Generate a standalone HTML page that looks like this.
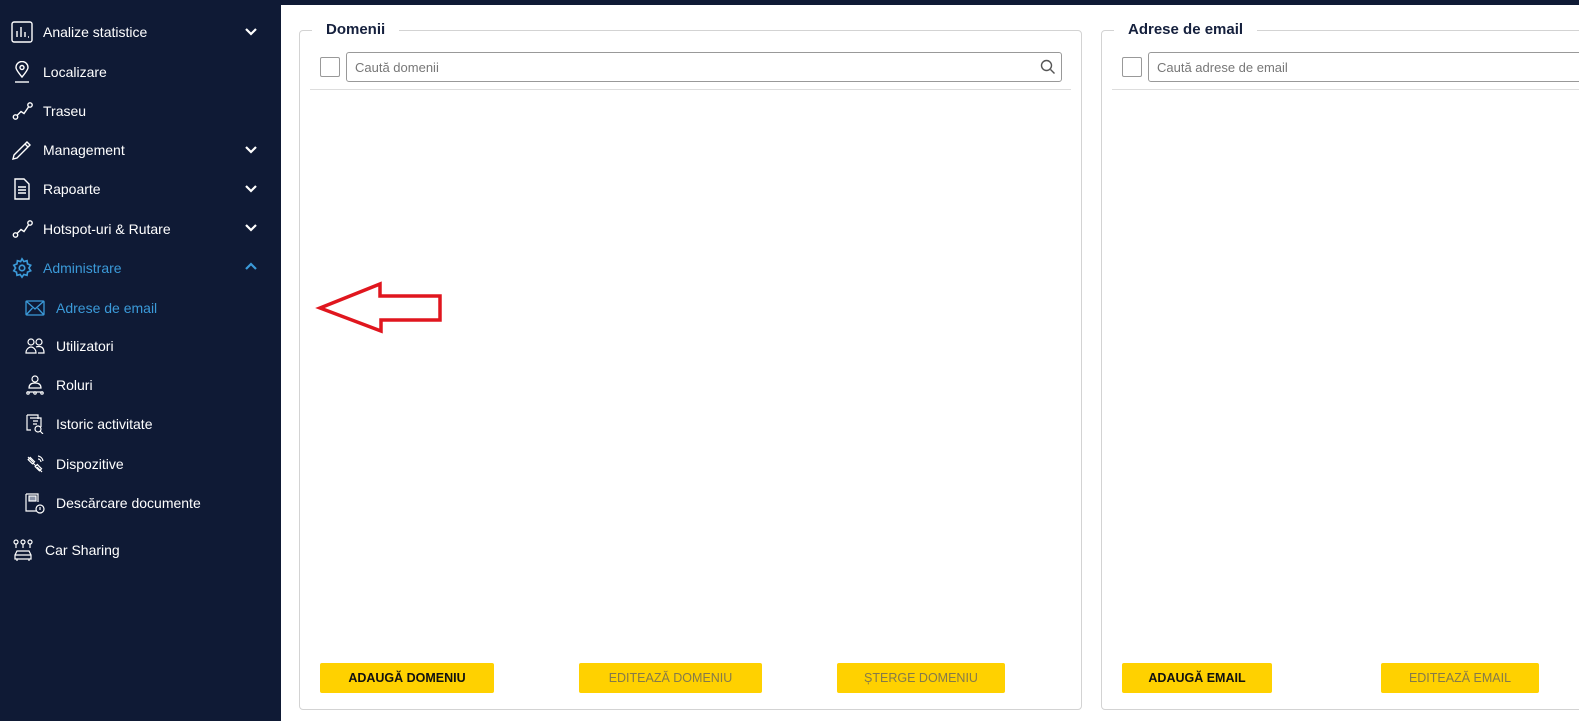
<!DOCTYPE html>
<html><head><meta charset="utf-8"><style>
*{box-sizing:border-box;margin:0;padding:0}
body{width:1579px;height:721px;overflow:hidden;background:#fff;font-family:"Liberation Sans",sans-serif;position:relative}
.sb{position:absolute;left:0;top:0;width:281px;height:721px;background:#0f1a35;color:#fff}
.top{position:absolute;left:281px;top:0;right:0;height:5px;background:#0f1a35}
.it{position:absolute;left:0;height:24px;display:flex;align-items:center;font-size:14px;color:#fff}
.it svg{position:absolute}
.it span{position:absolute;white-space:nowrap}
.chev{position:absolute;left:244px}
.blue{color:#3b9ad9}
.panel{position:absolute;top:30px;height:680px;border:1px solid #d3d3d3;border-radius:4px}
.legend{position:absolute;top:-10px;background:#fff;padding:0 14px;font-weight:bold;font-size:15px;color:#15203d}
.cb{position:absolute;top:26px;left:20px;width:20px;height:20px;border:1px solid #999;border-radius:2px}
.search{position:absolute;top:21px;left:46px;height:30px;border:1px solid #999;border-radius:3px;font-size:13px;color:#777;padding:7px 8px}
.hr{position:absolute;top:58px;left:10px;height:1px;background:#ddd}
.btn{position:absolute;top:632px;height:30px;background:#ffd100;border-radius:2px;font-size:12.5px;font-weight:bold;display:flex;align-items:center;justify-content:center;color:#111}
.dis{color:#857a4a;font-weight:normal}
</style></head><body>
<div class="sb">
<div class="it" style="top:20px"><svg style="left:11px" width="22" height="22" viewBox="0 0 22 22" fill="none" stroke="#fff" stroke-width="1.4"><rect x="1" y="1" width="20" height="20" rx="2"/><path d="M6 16V10M10 16V6M14 16V11M17 16h1"/></svg><span style="left:43px">Analize statistice</span></div>
<div class="it" style="top:60px"><svg style="left:13px" width="18" height="22" viewBox="0 0 18 22" fill="none" stroke="#fff" stroke-width="1.4"><path d="M9 16C4 10 3 8 3 6.5a6 6 0 0 1 12 0C15 8 14 10 9 16z"/><circle cx="9" cy="6.5" r="2"/><path d="M2 21h14"/></svg><span style="left:43px">Localizare</span></div>
<div class="it" style="top:99px"><svg style="left:12px" width="22" height="20" viewBox="0 0 22 20" fill="none" stroke="#fff" stroke-width="1.4"><circle cx="3.5" cy="16" r="2.2"/><circle cx="18" cy="4" r="2.2"/><path d="M5 14.5l4-4 3 2 4.5-6.5"/></svg><span style="left:43px">Traseu</span></div>
<div class="it" style="top:138px"><svg style="left:11px" width="22" height="22" viewBox="0 0 22 22" fill="none" stroke="#fff" stroke-width="1.4"><path d="M2 20l1-4L16 3l3 3L6 19z M14 5l3 3"/></svg><span style="left:43px">Management</span></div>
<div class="it" style="top:177px"><svg style="left:13px" width="18" height="22" viewBox="0 0 18 22" fill="none" stroke="#fff" stroke-width="1.4"><path d="M2 1h9l5 5v15H2z"/><path d="M5 9h8M5 12h8M5 15h8"/></svg><span style="left:43px">Rapoarte</span></div>
<div class="it" style="top:217px"><svg style="left:12px" width="22" height="20" viewBox="0 0 22 20" fill="none" stroke="#fff" stroke-width="1.4"><circle cx="3.5" cy="16" r="2.2"/><circle cx="18" cy="4" r="2.2"/><path d="M5 14.5l4-4 3 2 4.5-6.5"/></svg><span style="left:43px">Hotspot-uri &amp; Rutare</span></div>
<div class="it blue" style="top:256px"><svg style="left:11px" width="22" height="22" viewBox="0 0 24 24" fill="none" stroke="#3b9ad9" stroke-width="1.8"><circle cx="12" cy="12" r="3"/><path d="M12 2l2 3 3.5-1 .5 3.5 3.5 1.5-2 3 2 3-3.5 1.5-.5 3.5-3.5-1-2 3-2-3-3.5 1-.5-3.5L3 15l2-3-2-3 3.5-1.5L7 4l3.5 1z"/></svg><span style="left:43px">Administrare</span></div>
<div class="it blue" style="top:296px"><svg style="left:25px" width="20" height="16" viewBox="0 0 20 16" fill="none" stroke="#3b9ad9" stroke-width="1.3"><rect x="1" y="1" width="18" height="14" rx="1"/><path d="M1 1l9 8 9-8M1 15l6.5-7M19 15l-6.5-7"/></svg><span style="left:56px">Adrese de email</span></div>
<div class="it" style="top:334px"><svg style="left:25px" width="20" height="18" viewBox="0 0 20 18" fill="none" stroke="#fff" stroke-width="1.2"><circle cx="6" cy="5" r="3"/><circle cx="14" cy="5" r="3"/><path d="M1 16c0-4 3-6 5-6s5 2 5 6zM11 10c1-.5 2-.5 3-.5 3 0 5 2 5 6.5h-6"/></svg><span style="left:56px">Utilizatori</span></div>
<div class="it" style="top:373px"><svg style="left:26px" width="18" height="20" viewBox="0 0 18 20" fill="none" stroke="#fff" stroke-width="1.2"><circle cx="9" cy="4" r="3"/><path d="M3 13c0-4 3-5 6-5s6 1 6 5z M1 17h16"/><circle cx="2" cy="18" r="1.2"/><circle cx="9" cy="18" r="1.2"/><circle cx="16" cy="18" r="1.2"/></svg><span style="left:56px">Roluri</span></div>
<div class="it" style="top:412px"><svg style="left:25px" width="20" height="20" viewBox="0 0 20 20" fill="none" stroke="#fff" stroke-width="1.2"><path d="M2 1h11v4M2 1v15h4"/><path d="M5 4h11v9"/><path d="M8 7h5M8 10h4"/><circle cx="13" cy="15" r="3"/><path d="M15 17l3 3"/></svg><span style="left:56px">Istoric activitate</span></div>
<div class="it" style="top:452px"><svg style="left:26px" width="20" height="20" viewBox="0 0 20 20" fill="none" stroke="#fff" stroke-width="1.2"><path d="M2 3l5 5M7 9l3 3M11 13l5 5"/><rect x="4" y="4" width="3" height="6" transform="rotate(-45 5 7)"/><rect x="11" y="11" width="3" height="6" transform="rotate(-45 12 14)"/><path d="M12 2a6 6 0 0 1 5 5M12 5a3 3 0 0 1 3 3"/></svg><span style="left:56px">Dispozitive</span></div>
<div class="it" style="top:491px"><svg style="left:25px" width="20" height="22" viewBox="0 0 20 22" fill="none" stroke="#fff" stroke-width="1.2"><path d="M1 2h12v8M1 2v17h10"/><rect x="4" y="4" width="7" height="5" fill="#8a93a8"/><circle cx="15" cy="17" r="4"/><path d="M15 15v3"/></svg><span style="left:56px">Descărcare documente</span></div>
<div class="it" style="top:538px"><svg style="left:13px" width="20" height="22" viewBox="0 0 20 22" fill="none" stroke="#fff" stroke-width="1.2"><circle cx="3" cy="3" r="2"/><circle cx="10" cy="3" r="2"/><circle cx="17" cy="3" r="2"/><path d="M3 5v4M10 5v4M17 5v4M4 12h12l2 4v4H2v-4z M2 16h16M4 20v2M16 20v2"/></svg><span style="left:45px">Car Sharing</span></div>
<svg class="chev" style="top:27px" width="14" height="10" viewBox="0 0 14 10" fill="none" stroke="#fff" stroke-width="2.2"><path d="M2 2l5 5 5-5"/></svg>
<svg class="chev" style="top:145px" width="14" height="10" viewBox="0 0 14 10" fill="none" stroke="#fff" stroke-width="2.2"><path d="M2 2l5 5 5-5"/></svg>
<svg class="chev" style="top:184px" width="14" height="10" viewBox="0 0 14 10" fill="none" stroke="#fff" stroke-width="2.2"><path d="M2 2l5 5 5-5"/></svg>
<svg class="chev" style="top:223px" width="14" height="10" viewBox="0 0 14 10" fill="none" stroke="#fff" stroke-width="2.2"><path d="M2 2l5 5 5-5"/></svg>
<svg class="chev" style="top:262px" width="14" height="10" viewBox="0 0 14 10" fill="none" stroke="#3b9ad9" stroke-width="2.2"><path d="M2 7l5-5 5 5"/></svg>
</div>
<div class="top"></div>

<div class="panel" style="left:299px;width:783px">
<div class="legend" style="left:12px">Domenii</div>
<div class="cb"></div>
<div class="search" style="width:716px">Caută domenii
<svg style="position:absolute;right:5px;top:6px" width="16" height="16" viewBox="0 0 16 16" fill="none" stroke="#555" stroke-width="1.4"><circle cx="6.5" cy="6.5" r="5"/><path d="M10.5 10.5l4 4"/></svg></div>
<div class="hr" style="width:761px"></div>
<div class="btn" style="left:20px;width:174px">ADAUGĂ DOMENIU</div>
<div class="btn dis" style="left:279px;width:183px">EDITEAZĂ DOMENIU</div>
<div class="btn dis" style="left:537px;width:168px">ȘTERGE DOMENIU</div>
</div>

<div class="panel" style="left:1101px;width:500px">
<div class="legend" style="left:12px">Adrese de email</div>
<div class="cb"></div>
<div class="search" style="width:460px">Caută adrese de email</div>
<div class="hr" style="width:480px"></div>
<div class="btn" style="left:20px;width:150px">ADAUGĂ EMAIL</div>
<div class="btn dis" style="left:279px;width:158px">EDITEAZĂ EMAIL</div>
</div>

<svg style="position:absolute;left:0;top:0" width="1579" height="721"><path d="M320 308L380 284V296H440V320H381V331Z" fill="none" stroke="#e0161e" stroke-width="3.5" stroke-linejoin="miter"/></svg>
</body></html>
